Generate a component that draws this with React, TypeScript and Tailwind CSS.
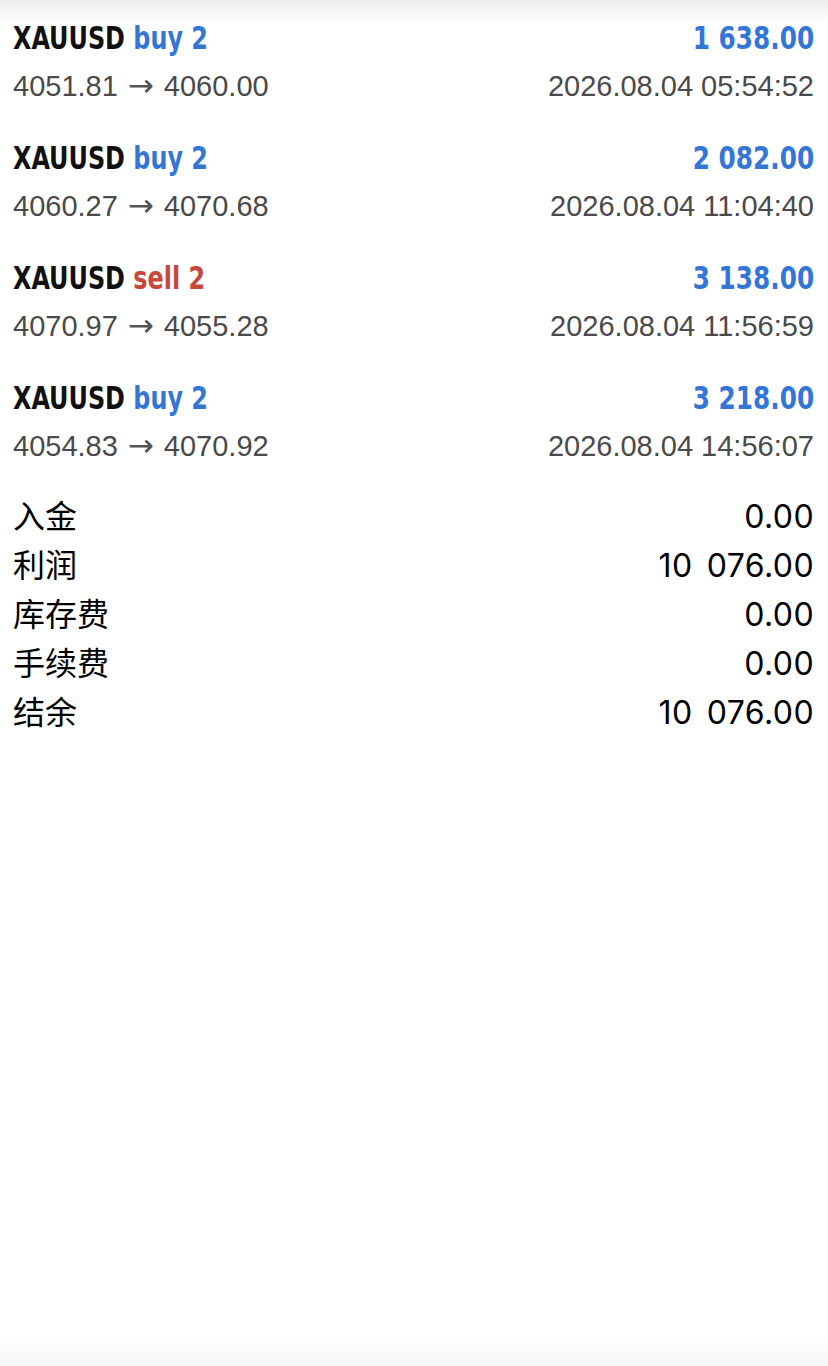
const trades = [
  { side: 'buy', lots: 2, profit: '1 638.00', open: '4051.81', close: '4060.00', time: '2026.08.04 05:54:52' },
  { side: 'buy', lots: 2, profit: '2 082.00', open: '4060.27', close: '4070.68', time: '2026.08.04 11:04:40' },
  { side: 'sell', lots: 2, profit: '3 138.00', open: '4070.97', close: '4055.28', time: '2026.08.04 11:56:59' },
  { side: 'buy', lots: 2, profit: '3 218.00', open: '4054.83', close: '4070.92', time: '2026.08.04 14:56:07' },
]

const summary = [
  { label: '入金', value: '0.00' },
  { label: '利润', value: '10 076.00' },
  { label: '库存费', value: '0.00' },
  { label: '手续费', value: '0.00' },
  { label: '结余', value: '10 076.00' },
]

const condensed = "font-['DejaVu_Sans_Condensed',sans-serif] font-bold"
const plain = "font-['Liberation_Sans','Noto_Sans_CJK_SC',sans-serif]"

export default function App() {
  return (
    <div className="relative min-h-[1366px] w-[828px] bg-white overflow-hidden">
      {/* soft shading at top and bottom edges */}
      <div className="absolute inset-x-0 top-0 h-6 bg-gradient-to-b from-[#ececec] to-white pointer-events-none" />
      <div className="absolute inset-x-0 bottom-0 h-8 bg-gradient-to-t from-[#f6f6f6] to-white pointer-events-none" />

      <div className="relative pl-[13px] pr-[14px] pt-[14px]">
        {trades.map((t, i) => (
          <div key={i} className="h-[120px]">
            <div className={`flex items-center justify-between h-12 text-[32px] ${condensed}`}>
              <div className="origin-left scale-x-[0.83] whitespace-nowrap">
                <span className="text-[#111]">XAUUSD</span>{' '}
                <span className={t.side === 'buy' ? 'text-[#3476d8]' : 'text-[#c9463a]'}>
                  {t.side} {t.lots}
                </span>
              </div>
              <span className="origin-right scale-x-[0.86] whitespace-nowrap text-[#3476d8]">{t.profit}</span>
            </div>
            <div className={`flex items-center justify-between h-12 leading-[48px] text-[29px] text-[#4a4a4a] ${plain}`}>
              <span className="whitespace-nowrap">
                {t.open}
                <span className="font-['DejaVu_Sans',sans-serif] text-[31px] leading-[0] mx-[10px] text-[#555]">→</span>
                {t.close}
              </span>
              <span>{t.time}</span>
            </div>
          </div>
        ))}

        <div className="-mt-[4px] text-black">
          {summary.map((s) => (
            <div key={s.label} className="flex items-baseline justify-between h-[49px] leading-[49px]">
              <span className="font-['Noto_Sans_CJK_SC',sans-serif] text-[32px]">{s.label}</span>
              <span className="font-['Inter',sans-serif] text-[32px] tracking-[0.4px] [word-spacing:5px]">
                {s.value}
              </span>
            </div>
          ))}
        </div>
      </div>
    </div>
  )
}
